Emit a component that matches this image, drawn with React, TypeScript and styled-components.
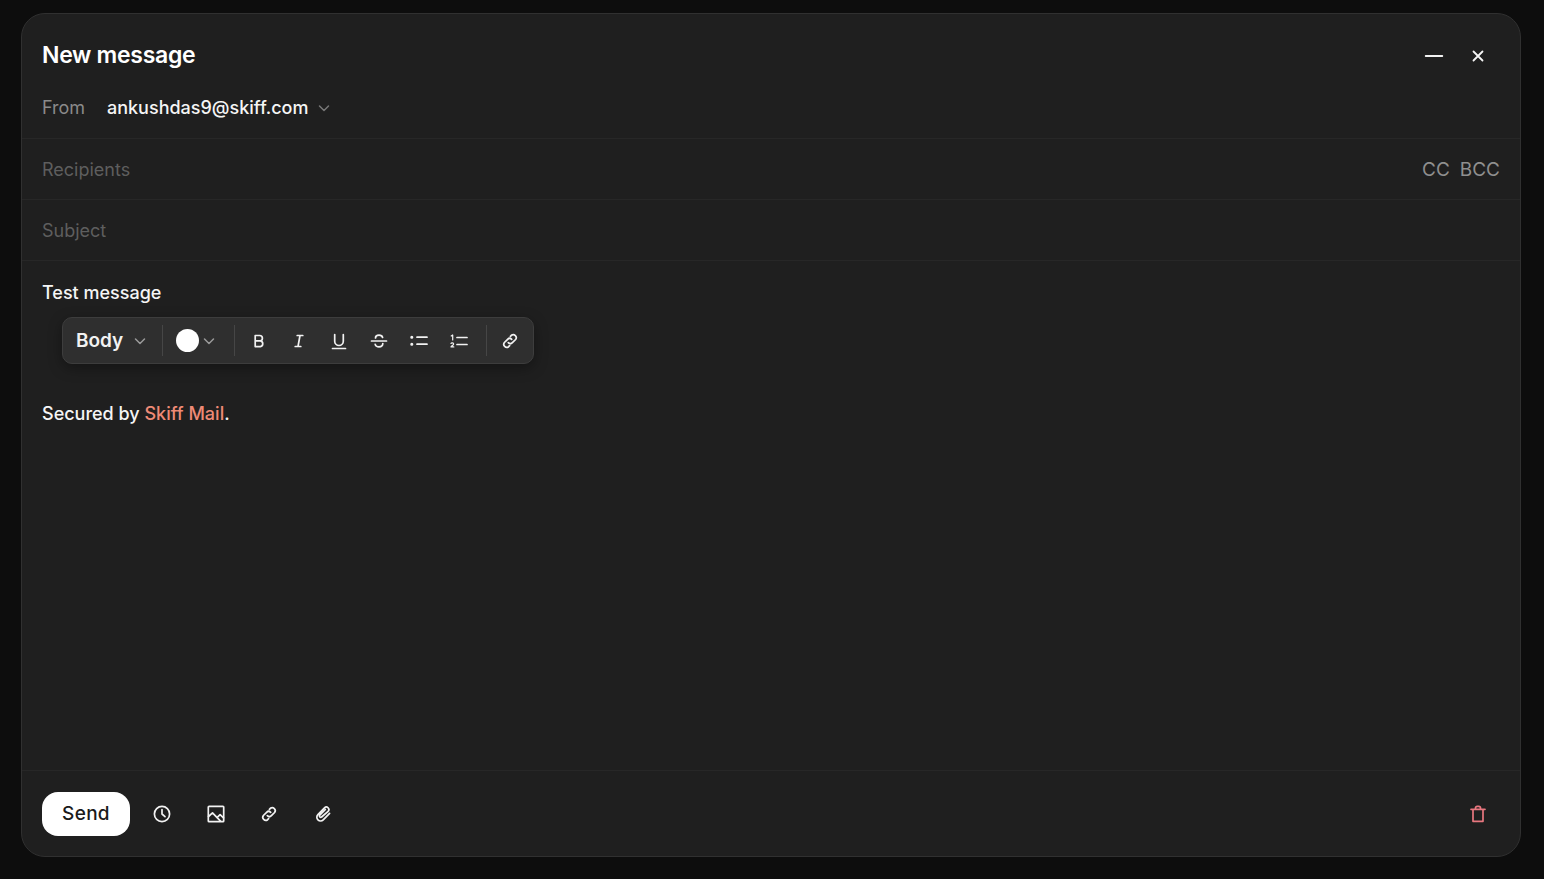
import React from 'react';
import styled, { createGlobalStyle } from 'styled-components';

const GlobalStyle = createGlobalStyle`
  html, body { margin: 0; height: 100%; background: #0d0d0d; }
  #root { height: 100%; }
  * { box-sizing: border-box; }
`;

const Page = styled.div`
  width: 1544px;
  height: 879px;
  padding: 13px 23px 22px 21px;
  background: #0d0d0d;
  font-family: Inter, 'Liberation Sans', sans-serif;
  overflow: hidden;
`;

const Composer = styled.div`
  height: 100%;
  display: flex;
  flex-direction: column;
  background: #1f1f1f;
  border: 1px solid #303030;
  border-radius: 24px;
`;

const Top = styled.div`
  height: 125px;
  flex: none;
  padding: 0 20px;
  border-bottom: 1px solid #272727;
`;

const TitleRow = styled.div`
  height: 83px;
  display: flex;
  align-items: center;
  justify-content: space-between;
  padding-bottom: 1px;
`;

const Title = styled.h1`
  margin: 0;
  font-size: 23px;
  font-weight: 600;
  letter-spacing: -0.3px;
  color: #ffffff;
`;

const WindowActions = styled.div`
  display: flex;
  align-items: center;
  gap: 24px;
  padding-right: 12px;
  padding-top: 2px;
`;

const FromRow = styled.div`
  display: flex;
  align-items: center;
  margin-top: -1px;
  font-size: 18px;
  line-height: 24px;
`;

const FromLabel = styled.span`
  width: 65px;
  color: #8a8a8a;
`;

const FromAddress = styled.span`
  color: #f5f5f5;
  font-weight: 500;
  margin-right: 9px;
`;

const FieldRow = styled.div`
  height: 61px;
  flex: none;
  display: flex;
  align-items: center;
  justify-content: space-between;
  padding: 0 20px;
  border-bottom: 1px solid #272727;
`;

const Placeholder = styled.span`
  font-size: 18px;
  color: #5e5e5e;
`;

const CopyLinks = styled.div`
  display: flex;
  gap: 10px;
  font-size: 19px;
  color: #8f8f8f;
`;

const Body = styled.div`
  position: relative;
  flex: 1;
  padding: 20px 20px 0;
  font-size: 18px;
  line-height: 24px;
  color: #f5f5f5;
  font-weight: 500;
  border-bottom: 1px solid #272727;
`;

const Signature = styled.p`
  margin: 97px 0 0;
`;

const Brand = styled.span`
  color: #ef8a76;
`;

const Bubble = styled.div`
  position: absolute;
  left: 40px;
  top: 56px;
  width: 472px;
  height: 47px;
  display: flex;
  align-items: center;
  background: #2f2f2f;
  border: 1px solid #3d3d3d;
  border-radius: 10px;
  box-shadow: 0 4px 14px rgba(0, 0, 0, 0.35);
`;

const StyleSelect = styled.div`
  width: 99px;
  display: flex;
  align-items: center;
  gap: 10px;
  padding-left: 13px;
  font-size: 19px;
  font-weight: 600;
  color: #f2f2f2;
`;

const Divider = styled.span`
  width: 1px;
  height: 31px;
  flex: none;
  background: #464646;
`;

const ColorSelect = styled.div`
  width: 71px;
  display: flex;
  align-items: center;
  gap: 3px;
  padding-left: 13px;
`;

const Swatch = styled.span`
  width: 23px;
  height: 23px;
  border-radius: 50%;
  background: #ffffff;
`;

const FormatGroup = styled.div`
  width: 251px;
  display: flex;
  align-items: center;
  gap: 20px;
  padding-left: 14px;
`;

const LinkGroup = styled.div`
  flex: 1;
  display: flex;
  justify-content: center;
  padding-right: 1px;
`;

const IconSlot = styled.span`
  width: 20px;
  height: 20px;
  display: inline-flex;
  align-items: center;
  justify-content: center;
  flex: none;
`;

const Footer = styled.div`
  height: 85px;
  flex: none;
  display: flex;
  align-items: center;
  padding: 0 20px;
`;

const SendButton = styled.button`
  width: 88px;
  height: 44px;
  border: 0;
  border-radius: 16px;
  background: #ffffff;
  color: #1a1a1a;
  font-family: inherit;
  font-size: 19px;
  font-weight: 500;
  letter-spacing: 0.3px;
`;

const FooterTools = styled.div`
  display: flex;
  align-items: center;
  gap: 33.7px;
  margin-left: 22px;
`;

const Trash = styled.span`
  margin-left: auto;
  margin-right: 12px;
  display: inline-flex;
`;

type IconProps = { size?: number; color?: string; width?: number; children: React.ReactNode };

const Icon = ({ size = 20, color = '#f2f2f2', width = 1.7, children }: IconProps) => (
  <svg width={size} height={size} viewBox="0 0 20 20" fill="none" stroke={color} strokeWidth={width} strokeLinecap="round" strokeLinejoin="round">
    {children}
  </svg>
);

const Chevron = ({ color = '#9a9a9a', size = 14 }: { color?: string; size?: number }) => (
  <svg width={size} height={size} viewBox="0 0 14 14" fill="none" stroke={color} strokeWidth="1.5" strokeLinecap="round" strokeLinejoin="round">
    <path d="M2.5 5l4.5 4.5L11.5 5" />
  </svg>
);

const PaperClip = ({ color }: { color?: string }) => (
  <Icon color={color}>
    <path d="M8.3 11.7a2.9 2.9 0 0 0 4.1 0l3.2-3.2a3 3 0 0 0-4.2-4.2l-1 1" />
    <path d="M11.7 8.3a2.9 2.9 0 0 0-4.1 0l-3.2 3.2a3 3 0 0 0 4.2 4.2l1-1" />
  </Icon>
);

export default function App() {
  return (
    <Page>
      <GlobalStyle />
      <Composer>
        <Top>
          <TitleRow>
            <Title>New message</Title>
            <WindowActions>
              <svg width="20" height="20" viewBox="0 0 20 20" stroke="#f2f2f2" strokeWidth="1.8" strokeLinecap="round">
                <path d="M1.7 10h16.6" />
              </svg>
              <svg width="20" height="20" viewBox="0 0 20 20" stroke="#f5f5f5" strokeWidth="1.8" strokeLinecap="round">
                <path d="M5.5 5.5l9 9M14.5 5.5l-9 9" />
              </svg>
            </WindowActions>
          </TitleRow>
          <FromRow>
            <FromLabel>From</FromLabel>
            <FromAddress>ankushdas9@skiff.com</FromAddress>
            <Chevron color="#777777" />
          </FromRow>
        </Top>
        <FieldRow>
          <Placeholder>Recipients</Placeholder>
          <CopyLinks>
            <span>CC</span>
            <span>BCC</span>
          </CopyLinks>
        </FieldRow>
        <FieldRow>
          <Placeholder>Subject</Placeholder>
        </FieldRow>
        <Body>
          <div>Test message</div>
          <Bubble>
            <StyleSelect>
              Body <Chevron />
            </StyleSelect>
            <Divider />
            <ColorSelect>
              <Swatch />
              <Chevron />
            </ColorSelect>
            <Divider />
            <FormatGroup>
              <IconSlot>
                <Icon>
                  <path d="M6.2 4.5h4.5a2.7 2.7 0 0 1 0 5.4H6.2zM6.2 9.9h5.2a2.9 2.9 0 0 1 0 5.7H6.2z" />
                </Icon>
              </IconSlot>
              <IconSlot>
                <Icon>
                  <path d="M8.2 4.5h5.6M6.2 15.5h5.6M11 4.5L9 15.5" />
                </Icon>
              </IconSlot>
              <IconSlot>
                <Icon>
                  <path d="M5.7 3.5v6.7a4.3 4.3 0 0 0 8.6 0V3.5M3.5 17.5h13" />
                </Icon>
              </IconSlot>
              <IconSlot>
                <Icon>
                  <path d="M2.5 10h15M13.6 6.4C13.2 5 11.8 4.2 10 4.2 8 4.2 6.5 5.2 6.5 7M13.8 12.6c0 2-1.6 3.3-3.8 3.3-2 0-3.4-.9-3.8-2.5" />
                </Icon>
              </IconSlot>
              <IconSlot>
                <Icon>
                  <path d="M8 6.2h10M8 13.2h10" />
                  <circle cx="2.8" cy="6.2" r=".7" fill="#f2f2f2" />
                  <circle cx="2.8" cy="13.2" r=".7" fill="#f2f2f2" />
                </Icon>
              </IconSlot>
              <IconSlot>
                <Icon>
                  <path d="M8 6.5h10M8 13.5h10" />
                  <path d="M2.2 5l1.5-1v5M2 12.5c.3-1 2.6-1 2.6.4 0 1-1.6 1.6-2.6 3h2.8" width="1" strokeWidth="1.2" />
                </Icon>
              </IconSlot>
            </FormatGroup>
            <Divider />
            <LinkGroup>
              <PaperClip />
            </LinkGroup>
          </Bubble>
          <Signature>
            Secured by <Brand>Skiff Mail</Brand>.
          </Signature>
        </Body>
        <Footer>
          <SendButton>Send</SendButton>
          <FooterTools>
            <Icon>
              <circle cx="10" cy="10" r="7.6" />
              <path d="M10 5.6V10l3 2.6" />
            </Icon>
            <Icon>
              <rect x="2.3" y="2.3" width="15.4" height="15.4" rx=".8" />
              <path d="M2.5 12.5l4-3.6 8 8.2M11.5 13.2l2.6-2.6 3.4 3.2" />
            </Icon>
            <PaperClip />
            <Icon>
              <path d="M16.6 9.3l-6.4 6.5a3.7 3.7 0 0 1-5.3-5.2l6.6-6.8a2.5 2.5 0 0 1 3.6 3.5L8.6 13a1.2 1.2 0 0 1-1.8-1.8l5.6-5.7" />
            </Icon>
          </FooterTools>
          <Trash>
            <Icon color="#e8777f">
              <path d="M3 5.3h14M5 5.3v12h10v-12M7.5 5.3V4a1.7 1.7 0 0 1 1.7-1.7h1.6A1.7 1.7 0 0 1 12.5 4v1.3" />
            </Icon>
          </Trash>
        </Footer>
      </Composer>
    </Page>
  );
}
